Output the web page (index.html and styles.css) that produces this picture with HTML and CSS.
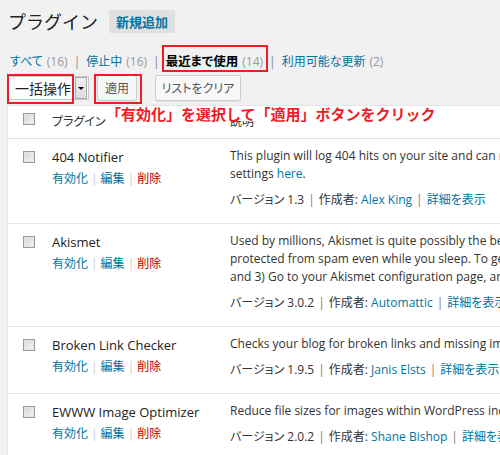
FILE: index.html
```html
<!DOCTYPE html>
<html lang="ja">
<head>
<meta charset="utf-8">
<link rel="stylesheet" href="styles.css">
</head>
<body>
<div class="wrap">
  <div class="title-row">
    <h1 class="title">プラグイン</h1>
    <span class="add-new">新規追加</span>
  </div>

  <ul class="subsubsub">
    <li><span class="link">すべて</span><span class="count">(16)</span></li>
    <li class="sep">|</li>
    <li><span class="link">停止中</span><span class="count">(16)</span></li>
    <li class="sep">|</li>
    <li class="current-item"><span class="current">最近まで使用</span><span class="count">(14)</span><span class="redbox redbox-current"></span></li>
    <li class="sep">|</li>
    <li><span class="link">利用可能な更新</span><span class="count">(2)</span></li>
  </ul>

  <div class="tablenav">
    <div class="select">
      <span class="select-text">一括操作</span>
      <span class="select-arrow"><span class="tri"></span></span>
      <span class="redbox redbox-select"></span>
    </div>
    <span class="button apply">適用<span class="redbox redbox-apply"></span></span>
    <span class="button clear">リストをクリア</span>
  </div>

  <div class="table-wrap">
    <div class="annotation">「有効化」を選択して「適用」ボタンをクリック</div>
    <table class="plugins">
      <thead>
        <tr>
          <th class="cb"><span class="checkbox"></span></th>
          <th class="col-name">プラグイン</th>
          <th class="col-desc">説明</th>
        </tr>
      </thead>
      <tbody>
        <tr>
          <td class="cb"><span class="checkbox"></span></td>
          <td class="col-name">
            <div class="plugin-name">404 Notifier</div>
            <div class="row-actions"><span class="link">有効化</span><span class="rsep">|</span><span class="link">編集</span><span class="rsep">|</span><span class="delete">削除</span></div>
          </td>
          <td class="col-desc">
            <div class="desc">This plugin will log 404 hits on your site and can notify you via e-mail or you can subscribe to the generated RSS feed of 404 events. Adjust your<br>settings <span class="link">here</span>.</div>
            <div class="version">バージョン 1.3<span class="vsep">|</span>作成者: <span class="link">Alex King</span><span class="vsep">|</span><span class="link">詳細を表示</span></div>
          </td>
        </tr>
        <tr>
          <td class="cb"><span class="checkbox"></span></td>
          <td class="col-name">
            <div class="plugin-name">Akismet</div>
            <div class="row-actions"><span class="link">有効化</span><span class="rsep">|</span><span class="link">編集</span><span class="rsep">|</span><span class="delete">削除</span></div>
          </td>
          <td class="col-desc">
            <div class="desc">Used by millions, Akismet is quite possibly the best way in the world to protect your blog from comment and trackback spam. It keeps your site<br>protected from spam even while you sleep. To get started: 1) Click the "Activate" link to the left of this description, 2) Sign up for an Akismet API key,<br>and 3) Go to your Akismet configuration page, and save your API key.</div>
            <div class="version">バージョン 3.0.2<span class="vsep">|</span>作成者: <span class="link">Automattic</span><span class="vsep">|</span><span class="link">詳細を表示</span></div>
          </td>
        </tr>
        <tr>
          <td class="cb"><span class="checkbox"></span></td>
          <td class="col-name">
            <div class="plugin-name">Broken Link Checker</div>
            <div class="row-actions"><span class="link">有効化</span><span class="rsep">|</span><span class="link">編集</span><span class="rsep">|</span><span class="delete">削除</span></div>
          </td>
          <td class="col-desc">
            <div class="desc">Checks your blog for broken links and missing images and notifies you on the dashboard if any are found.</div>
            <div class="version">バージョン 1.9.5<span class="vsep">|</span>作成者: <span class="link">Janis Elsts</span><span class="vsep">|</span><span class="link">詳細を表示</span></div>
          </td>
        </tr>
        <tr>
          <td class="cb"><span class="checkbox"></span></td>
          <td class="col-name">
            <div class="plugin-name">EWWW Image Optimizer</div>
            <div class="row-actions"><span class="link">有効化</span><span class="rsep">|</span><span class="link">編集</span><span class="rsep">|</span><span class="delete">削除</span></div>
          </td>
          <td class="col-desc">
            <div class="desc">Reduce file sizes for images within WordPress including NextGEN Gallery and GRAND FlAGallery. Uses jpegtran, optipng/pngout, and gifsicle.</div>
            <div class="version">バージョン 2.0.2<span class="vsep">|</span>作成者: <span class="link">Shane Bishop</span><span class="vsep">|</span><span class="link">詳細を表示</span></div>
          </td>
        </tr>
      </tbody>
    </table>
  </div>
</div>
</body>
</html>
```

FILE: styles.css
```css
* {
  box-sizing: border-box;
}

html,
body {
  margin: 0;
  padding: 0;
}

body {
  width: 500px;
  height: 455px;
  overflow: hidden;
  background: #f1f1f1;
  color: #444;
  font-family: "Open Sans", "Noto Sans CJK JP", sans-serif;
  font-size: 12px;
  font-feature-settings: "palt";
}

.wrap {
  padding-top: 10px;
}

.link {
  color: #0074a2;
}

.delete {
  color: #b00;
}

/* Title */
.title-row {
  display: flex;
  align-items: center;
  gap: 11px;
  height: 23px;
  padding-left: 8px;
}

.title {
  margin: 0;
  font-family: "Noto Sans CJK JP", sans-serif;
  font-feature-settings: normal;
  font-size: 18px;
  font-weight: normal;
  line-height: 23px;
  color: #222;
}

.add-new {
  display: flex;
  align-items: center;
  height: 23px;
  padding: 0 7px;
  background: #e0e0e0;
  border-radius: 2px;
  color: #0074a2;
  font-family: "Noto Sans CJK JP", sans-serif;
  font-size: 13px;
  font-weight: bold;
}

/* Filter links */
.subsubsub {
  list-style: none;
  margin: 20px 0 0;
  padding: 0 0 0 10px;
  display: flex;
  align-items: center;
  height: 18px;
  line-height: 18px;
  font-size: 12px;
  white-space: nowrap;
}

.subsubsub li {
  display: flex;
  align-items: baseline;
}

.sep {
  color: #888;
  margin: 0 6px;
}

.count {
  color: #999;
  margin-left: 4px;
}

.current-item {
  position: relative;
}

.current {
  font-weight: bold;
  font-size: 12.5px;
  color: #000;
}

/* Red annotation boxes */
.redbox {
  position: absolute;
  border: 2px solid #ee1c24;
  pointer-events: none;
}

.redbox-current {
  left: -4px;
  right: -5px;
  top: -8px;
  bottom: -1px;
}

.redbox-select {
  left: -2px;
  top: -3px;
  width: 67px;
  height: 30px;
}

.redbox-apply {
  left: -4px;
  top: -2px;
  width: 48px;
  height: 30px;
}

/* Bulk actions */
.tablenav {
  display: flex;
  align-items: center;
  height: 26px;
  margin-top: 4px;
  padding-left: 8px;
}

.select {
  position: relative;
  display: flex;
  align-items: center;
  justify-content: space-between;
  width: 81px;
  height: 24px;
  padding: 0 1px 0 6px;
  background: #fff;
  border: 1px solid #c8c8c8;
  font-family: "Noto Sans CJK JP", sans-serif;
  font-size: 14px;
  color: #222;
}

.select-arrow {
  display: flex;
  align-items: center;
  justify-content: center;
  width: 12px;
  height: 22px;
  background: linear-gradient(#f0f0f0, #dcdcdc);
  border: 1px solid #a9a9a9;
}

.tri {
  width: 0;
  height: 0;
  border-left: 3px solid transparent;
  border-right: 3px solid transparent;
  border-top: 3px solid #000;
}

.button {
  position: relative;
  display: flex;
  align-items: center;
  justify-content: center;
  height: 26px;
  background: #f7f7f7;
  border: 1px solid #cccccc;
  border-radius: 3px;
  box-shadow: inset 0 1px 0 #fff, 0 1px 0 rgba(0, 0, 0, 0.06);
  color: #555;
  font-size: 12px;
}

.apply {
  width: 40px;
  margin-left: 8px;
}

.clear {
  width: 86px;
  margin-left: 18px;
}

/* Table */
.table-wrap {
  position: relative;
  margin: 4px 0 0 7px;
  width: 900px;
}

.annotation {
  position: absolute;
  left: 99px;
  top: 1px;
  z-index: 2;
  background: #fff;
  color: #ee1c24;
  font-family: "Noto Sans CJK JP", sans-serif;
  font-feature-settings: normal;
  font-size: 15px;
  font-weight: bold;
  line-height: 15px;
  white-space: nowrap;
}

.plugins {
  width: 900px;
  border-collapse: separate;
  border-spacing: 0;
  background: #fff;
  border: 1px solid #e5e5e5;
  table-layout: fixed;
}

.plugins th,
.plugins td {
  vertical-align: top;
  text-align: left;
  font-weight: normal;
}

.plugins th {
  padding: 7px 10px 8px;
  line-height: 17px;
  font-size: 12px;
  color: #333;
  border-bottom: 1px solid #e1e1e1;
}

.plugins td {
  padding: 8px 10px 14px;
  border-bottom: 1px solid #e5e5e5;
}

.plugins th.cb {
  width: 34px;
  padding: 7px 0 0 15px;
}

.plugins td.cb {
  padding: 12px 0 0 15px;
}

.plugins .col-name {
  width: 178px;
}

.checkbox {
  display: block;
  width: 12px;
  height: 12px;
  border: 1px solid #999;
  background: linear-gradient(135deg, #d4d4d4, #f7f7f7);
  box-shadow: inset 0 0 0 1px #e6e6e6;
}

.plugin-name {
  font-size: 13px;
  line-height: 21px;
  color: #222;
  white-space: nowrap;
}

.row-actions {
  font-size: 12px;
  line-height: 21px;
  white-space: nowrap;
}

.rsep {
  color: #ccc;
  margin: 0 3px;
}

.desc {
  font-size: 12px;
  line-height: 18px;
  color: #333;
  white-space: nowrap;
}

.version {
  margin-top: 8px;
  font-size: 12px;
  line-height: 18px;
  color: #333;
  white-space: nowrap;
}

.vsep {
  color: #777;
  margin: 0 4px;
}
```
